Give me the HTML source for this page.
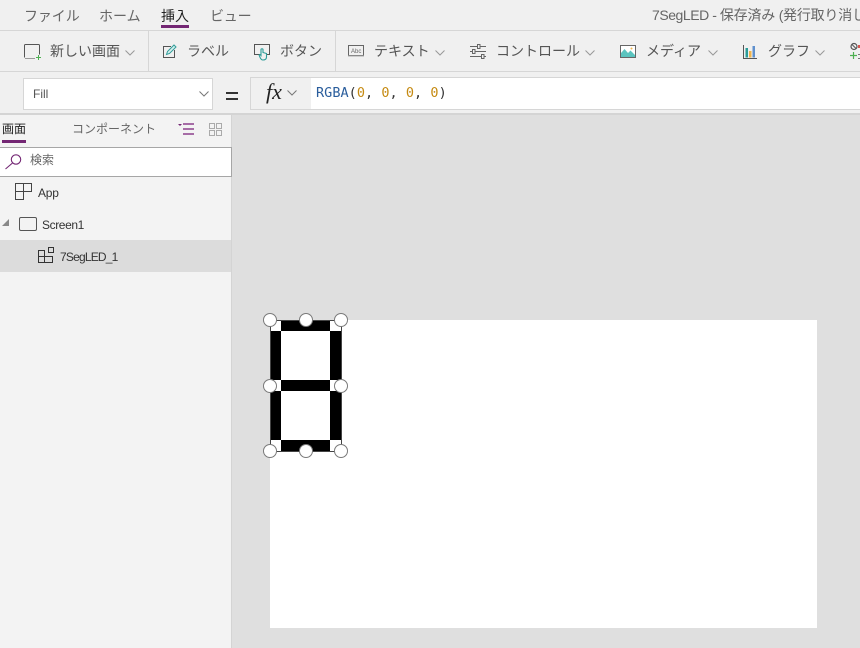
<!DOCTYPE html>
<html lang="ja">
<head>
<meta charset="utf-8">
<style>
html,body{margin:0;padding:0;background:#dfdfdf}
#p{position:relative;width:860px;height:648px;overflow:hidden;background:#dfdfdf;font-family:"Liberation Sans","Noto Sans CJK JP",sans-serif;color:#444}
.a{position:absolute}
.t{position:absolute;white-space:nowrap;line-height:20px;height:20px}
svg{position:absolute;overflow:visible}
.r{font-size:14px;color:#555}
.h{width:12px;height:12px;border:1px solid #7a7a7a;background:#fff;border-radius:50%;position:absolute}
.s{position:absolute;background:#000}
</style>
</head>
<body>
<div id="p">
<!-- top chrome -->
<div class="a" style="left:0;top:0;width:860px;height:114px;background:#f0f0f0"></div>
<div class="a" style="left:0;top:30px;width:860px;height:1px;background:#d6d6d6"></div>
<div class="a" style="left:0;top:71px;width:860px;height:1px;background:#d6d6d6"></div>
<div class="a" style="left:0;top:113px;width:860px;height:2px;background:#d4d4d4"></div>
<div class="a" style="left:148px;top:31px;width:1px;height:40px;background:#d6d6d6"></div>
<div class="a" style="left:335px;top:31px;width:1px;height:40px;background:#d6d6d6"></div>

<div class="t r" style="left:24px;top:6px;color:#666;letter-spacing:-.1px">ファイル</div>
<div class="t r" style="left:99px;top:6px;color:#666">ホーム</div>
<div class="t r" style="left:161px;top:6px;color:#222">挿入</div>
<div class="a" style="left:161px;top:25px;width:28px;height:3px;background:#742774"></div>
<div class="t r" style="left:210px;top:6px;color:#666;letter-spacing:-.2px">ビュー</div>
<div class="t" style="left:652px;top:5px;font-size:14px;color:#666;letter-spacing:-.2px"><span style="letter-spacing:-.45px">7SegLED - </span>保存済み <span style="letter-spacing:-.4px">(</span>発行取り消し済み)</div>

<!-- ribbon -->
<svg style="left:24px;top:44px" width="18" height="16" fill="none"><path d="M.5 13.500V1.500c0-.6.400-1 1-1h13c.6 0 1 .4 1 1v9" stroke="#555"/><path d="M1 14.500h10" stroke="#999"/><path d="M12 13.500h5M14.500 11v5" stroke="#4caf50"/></svg>
<div class="t r" style="left:50px;top:41px">新しい画面</div>
<svg style="left:125px;top:50px" width="10" height="6" fill="none"><path d="M.5.5l4.500 4.500L9.500.5" stroke="#999"/></svg>

<svg style="left:163px;top:44px" width="14" height="14" fill="none"><path d="M8 2.500H.5v11h11V6" stroke="#555"/><path d="M3.500 10.500l1-3L11 1l2 2-6.500 6.500z" fill="#d5efee" stroke="#2f9c98"/></svg>
<div class="t r" style="left:187px;top:41px">ラベル</div>
<svg style="left:254px;top:44px" width="18" height="17" fill="none"><path d="M6 10.500H.5V.5h15v10H12" stroke="#555"/><path d="M7 5.500v6l-1-1c-1 0-1 1-.5 1.500.5 1 1 4 3.500 4s3.500-1 3.500-3V9.500L9 8.500V5.500c0-1-2-1-2 0z" fill="#f0f0f0" stroke="#2b9c98" stroke-width="1.100"/></svg>
<div class="t r" style="left:280px;top:41px">ボタン</div>

<svg style="left:348px;top:45px" width="16" height="12" fill="none"><rect x=".5" y=".5" width="15" height="10" stroke="#666"/><rect x="0" y="10.500" width="16" height="1" fill="#aaa"/><text x="3" y="8" font-size="6" font-family="Liberation Sans" fill="#666">Abc</text></svg>
<div class="t r" style="left:374px;top:41px">テキスト</div>
<svg style="left:435px;top:50px" width="10" height="6" fill="none"><path d="M.5.5l4.500 4.500L9.500.5" stroke="#999"/></svg>

<svg style="left:470px;top:44px" width="16" height="15" fill="none"><path d="M0 2.500h7M10 2.500h6M0 7.500h2M5 7.500h11M0 12.500h11M14 12.500h2" stroke="#666"/><rect x="7.500" y=".5" width="2.500" height="4" stroke="#666"/><rect x="2.500" y="5.500" width="2.500" height="4" stroke="#666"/><rect x="11.500" y="10.500" width="2.500" height="4" stroke="#666"/></svg>
<div class="t r" style="left:496px;top:41px">コントロール</div>
<svg style="left:585px;top:50px" width="10" height="6" fill="none"><path d="M.5.5l4.500 4.500L9.500.5" stroke="#999"/></svg>

<svg style="left:620px;top:45px" width="16" height="13" fill="none"><rect x=".5" y=".5" width="15" height="12" fill="#fff" stroke="#666"/><path d="M1 12V8l3.500-4 3.500 4 2.500-2.500L15 10v2z" fill="#5bc4bf"/><circle cx="11.500" cy="3.500" r="1" fill="#f0b44c"/></svg>
<div class="t r" style="left:646px;top:41px">メディア</div>
<svg style="left:708px;top:50px" width="10" height="6" fill="none"><path d="M.5.5l4.500 4.500L9.500.5" stroke="#999"/></svg>

<svg style="left:743px;top:45px" width="14" height="14" fill="none"><path d="M.5 0v13.500H14" stroke="#555"/><rect x="2.500" y="3" width="2.500" height="9.500" fill="#2b9c98"/><rect x="6" y="6" width="2.500" height="6.500" fill="#f0b44c"/><rect x="9.500" y="1" width="2.500" height="11.500" fill="#3b78c4" opacity=".8"/></svg>
<div class="t r" style="left:768px;top:41px">グラフ</div>
<svg style="left:815px;top:50px" width="10" height="6" fill="none"><path d="M.5.5l4.500 4.500L9.500.5" stroke="#999"/></svg>

<svg style="left:850px;top:43px" width="10" height="17" fill="none"><circle cx="4" cy="3.500" r="3" stroke="#555" stroke-width="1.200"/><path d="M2 1.500l4 4" stroke="#555"/><path d="M0 12.500h7M3.500 9v7" stroke="#4caf50" stroke-width="1.200"/><path d="M8 2h2v3H8z" fill="#d9534f"/><path d="M8 11h2v1H8zM8 15h2v1H8z" fill="#777"/></svg>

<!-- formula bar -->
<div class="a" style="left:23px;top:78px;width:188px;height:30px;background:#fff;border:1px solid #d6d6d6"></div>
<div class="t" style="left:33px;top:84px;font-size:12px;color:#555">Fill</div>
<svg style="left:199px;top:91px" width="10" height="6" fill="none"><path d="M.5.5l4.500 4.500L9.500.5" stroke="#777"/></svg>
<div class="a" style="left:226px;top:92px;width:12px;height:2px;background:#333"></div>
<div class="a" style="left:226px;top:98px;width:12px;height:2px;background:#333"></div>
<div class="a" style="left:250px;top:77px;width:60px;height:31px;background:#f0f0f0;border:1px solid #d6d6d6;box-sizing:content-box"></div>
<div class="t" style="left:266px;top:82px;font:italic 22px/20px 'Liberation Serif',serif;color:#222">fx</div>
<svg style="left:287px;top:90px" width="10" height="6" fill="none"><path d="M.5.5l4.500 4.500L9.500.5" stroke="#777"/></svg>
<div class="a" style="left:311px;top:77px;width:549px;height:31px;background:#fff;border-top:1px solid #d6d6d6;border-bottom:1px solid #d6d6d6"></div>
<div class="t" style="left:316px;top:83px;font:13.500px/20px 'DejaVu Sans Mono',monospace;letter-spacing:.04px;color:#333"><span style="color:#2a5d9c">RGBA</span>(<span style="color:#c58a12">0</span>, <span style="color:#c58a12">0</span>, <span style="color:#c58a12">0</span>, <span style="color:#c58a12">0</span>)</div>

<!-- left panel -->
<div class="a" style="left:0;top:115px;width:231px;height:533px;background:#f3f3f3;border-right:1px solid #d4d4d4"></div>
<div class="t" style="left:2px;top:119px;font-size:12px;color:#222">画面</div>
<div class="a" style="left:2px;top:140px;width:24px;height:3px;background:#742774"></div>
<div class="t" style="left:72px;top:119px;font-size:12px;color:#666">コンポーネント</div>
<svg style="left:178px;top:123px" width="17" height="13" fill="none"><path d="M0 1h4L2 3z" fill="#742774"/><path d="M5 1h11M5 6h11M5 11h11" stroke="#9b5a9b" stroke-width="1.700"/></svg>
<svg style="left:209px;top:123px" width="13" height="13" fill="none"><rect x=".5" y=".5" width="5" height="5" stroke="#aaa"/><rect x="7.500" y=".5" width="5" height="5" stroke="#aaa"/><rect x=".5" y="7.500" width="5" height="5" stroke="#aaa"/><rect x="7.500" y="7.500" width="5" height="5" stroke="#aaa"/></svg>

<div class="a" style="left:0;top:147px;height:28px;background:#fff;border:1px solid #a6a6a6;border-left:0;box-sizing:content-box;width:231px"></div>
<svg style="left:5px;top:153px" width="17" height="17" fill="none"><circle cx="11" cy="6.500" r="4.700" stroke="#742774" stroke-width="1.100"/><path d="M7.500 10L.5 16" stroke="#742774" stroke-width="1.100"/></svg>
<div class="t" style="left:30px;top:150px;font-size:12px;color:#666">検索</div>

<svg style="left:15px;top:183px" width="18" height="18" fill="none"><path d="M.5.5h16v8h-8v8h-8zM.5 8.500h8V.5" stroke="#444"/></svg>
<div class="t" style="left:38px;top:183px;font-size:12px;color:#333;letter-spacing:-.2px">App</div>

<svg style="left:2px;top:219px" width="7" height="7"><path d="M7 0v7H0z" fill="#888"/></svg>
<svg style="left:19px;top:217px" width="18" height="14" fill="none"><rect x=".5" y=".5" width="17" height="13" rx="1.500" stroke="#555"/></svg>
<div class="t" style="left:42px;top:215px;font-size:12px;color:#333;letter-spacing:-.4px">Screen1</div>

<div class="a" style="left:0;top:240px;width:231px;height:32px;background:#dcdcdc"></div>
<svg style="left:38px;top:247px" width="16" height="17" fill="none"><path d="M.5 3.500h6v6h-6zM.5 9.500h6v6h-6zM6.500 9.500h8v6h-8zM6.500 3.500v6" stroke="#333"/><rect x="10.500" y=".5" width="5" height="5" stroke="#333"/></svg>
<div class="t" style="left:60px;top:247px;font-size:12px;color:#333;letter-spacing:-.8px">7SegLED_1</div>

<!-- canvas -->
<div class="a" style="left:270px;top:320px;width:547px;height:308px;background:#fff"></div>
<div class="s" style="left:281px;top:320px;width:49px;height:11px"></div>
<div class="s" style="left:281px;top:380px;width:49px;height:11px"></div>
<div class="s" style="left:281px;top:440px;width:49px;height:11px"></div>
<div class="s" style="left:270px;top:331px;width:11px;height:49px"></div>
<div class="s" style="left:270px;top:391px;width:11px;height:49px"></div>
<div class="s" style="left:330px;top:331px;width:11px;height:49px"></div>
<div class="s" style="left:330px;top:391px;width:11px;height:49px"></div>
<div class="a" style="left:270px;top:320px;width:70px;height:130px;border:1px solid #444;box-sizing:content-box"></div>
<div class="h" style="left:263px;top:313px"></div>
<div class="h" style="left:299px;top:313px"></div>
<div class="h" style="left:334px;top:313px"></div>
<div class="h" style="left:263px;top:379px"></div>
<div class="h" style="left:334px;top:379px"></div>
<div class="h" style="left:263px;top:444px"></div>
<div class="h" style="left:299px;top:444px"></div>
<div class="h" style="left:334px;top:444px"></div>
</div>
</body>
</html>
